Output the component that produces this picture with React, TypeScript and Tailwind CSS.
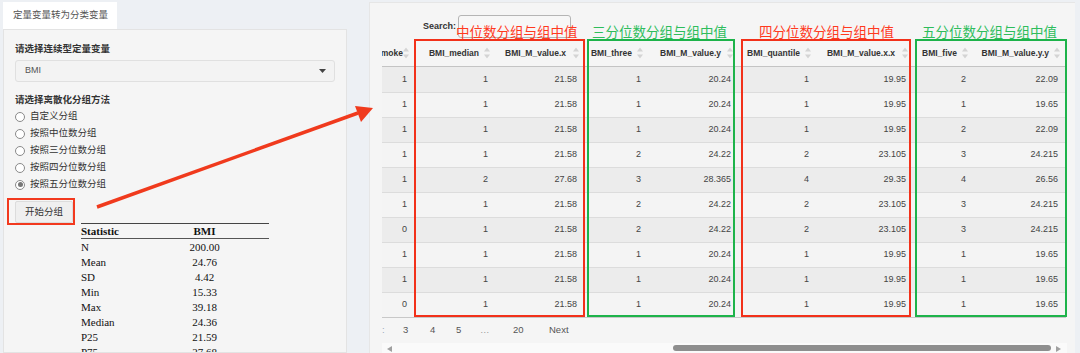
import React from 'react';

const cols = [
  { name: 'smoke', w: 'w-[33px]', pr: 'pr-[12px]' },
  { name: 'BMI_median', w: 'w-[81px]', pr: 'pr-[17px]' },
  { name: 'BMI_M_value.x', w: 'w-[89px]', pr: 'pr-[19px]' },
  { name: 'BMI_three', w: 'w-[64px]', pr: 'pr-[17px]' },
  { name: 'BMI_M_value.y', w: 'w-[90px]', pr: 'pr-[18px]' },
  { name: 'BMI_quantile', w: 'w-[78px]', pr: 'pr-[17px]' },
  { name: 'BMI_M_value.x.x', w: 'w-[97px]', pr: 'pr-[19px]' },
  { name: 'BMI_five', w: 'w-[60px]', pr: 'pr-[17px]' },
  { name: 'BMI_M_value.y.y', w: 'w-[92px]', pr: 'pr-[17px]' },
];

const rows = [
  ['1', '1', '21.58', '1', '20.24', '1', '19.95', '2', '22.09'],
  ['1', '1', '21.58', '1', '20.24', '1', '19.95', '1', '19.65'],
  ['1', '1', '21.58', '1', '20.24', '1', '19.95', '2', '22.09'],
  ['1', '1', '21.58', '2', '24.22', '2', '23.105', '3', '24.215'],
  ['1', '2', '27.68', '3', '28.365', '4', '29.35', '4', '26.56'],
  ['1', '1', '21.58', '2', '24.22', '2', '23.105', '3', '24.215'],
  ['0', '1', '21.58', '2', '24.22', '2', '23.105', '3', '24.215'],
  ['1', '1', '21.58', '1', '20.24', '1', '19.95', '1', '19.65'],
  ['1', '1', '21.58', '1', '20.24', '1', '19.95', '1', '19.65'],
  ['0', '1', '21.58', '1', '20.24', '1', '19.95', '1', '19.65'],
];

const stats = [
  ['N', '200.00'],
  ['Mean', '24.76'],
  ['SD', '4.42'],
  ['Min', '15.33'],
  ['Max', '39.18'],
  ['Median', '24.36'],
  ['P25', '21.59'],
  ['P75', '27.68'],
];

const methods = ['自定义分组', '按照中位数分组', '按照三分位数分组', '按照四分位数分组', '按照五分位数分组'];

const SortIcon = () => (
  <svg className="absolute right-[6px] top-1/2 -translate-y-1/2" width="6" height="11" viewBox="0 0 6 11">
    <path d="M3 0L6 4H0Z" fill="#d4d4d4" />
    <path d="M3 11L6 7H0Z" fill="#d4d4d4" />
  </svg>
);

const App: React.FC = () => {
  return (
    <div className="relative w-[1080px] h-[353px] overflow-hidden bg-[#edf0f4] flex font-['Liberation_Sans','Noto_Sans_CJK_SC',sans-serif] text-[#333]">
      {/* left sidebar */}
      <div className="w-[347px] h-[353px] pl-[3px] pt-[2px] flex flex-col shrink-0">
        <div className="w-[114px] h-[27px] shrink-0 bg-white flex items-center pl-[10px] text-[9.5px] text-[#555]">
          定量变量转为分类变量
        </div>
        <div className="flex-1 min-h-0 overflow-hidden bg-[#f5f5f5] border border-[#e3e3e3] px-[11px] pt-[12px]">
          <div className="text-[9.5px] leading-[14px] font-bold">请选择连续型定量变量</div>
          <div className="mt-[4px] h-[22px] border border-[#e0e0e0] rounded-[3px] bg-[#f3f3f3] flex items-center justify-between pl-[9px] pr-[8px]">
            <span className="text-[9px] text-[#555]">BMI</span>
            <svg width="7" height="4" viewBox="0 0 7 4">
              <path d="M0 0H7L3.5 4Z" fill="#444" />
            </svg>
          </div>
          <div className="mt-[11px] text-[9.5px] leading-[14px] font-bold">请选择离散化分组方法</div>
          <div className="mt-[1px] flex flex-col">
            {methods.map((m, i) => (
              <div key={m} className="h-[17px] flex items-center gap-[5px]">
                <span className="w-[10px] h-[10px] rounded-full border border-[#8a8a8a] bg-white flex items-center justify-center">
                  {i === 4 && <span className="w-[5px] h-[5px] rounded-full bg-[#777]" />}
                </span>
                <span className="text-[9.5px] text-[#333]">{m}</span>
              </div>
            ))}
          </div>
          <div className="relative mt-[8px] w-[58px] h-[22px]">
            <div className="w-[58px] h-[22px] bg-[#efefef] border border-[#dcdcdc] rounded-[2px] flex items-center justify-center text-[9.5px] text-[#333]">
              开始分组
            </div>
            <div className="absolute -left-[8px] -top-[3px] -right-[2px] -bottom-[2px] border-2 border-[#f2391e]" />
          </div>
          <div className="ml-[66px] w-[188px] border-t-[1.5px] border-[#444] font-['Liberation_Serif',serif] text-[11px] text-[#111]">
            <div className="grid grid-cols-[59px_129px] h-[15px] leading-[15px] font-bold border-b border-[#555]">
              <span>Statistic</span>
              <span className="text-center">BMI</span>
            </div>
            {stats.map(([k, v]) => (
              <div key={k} className="grid grid-cols-[59px_129px] h-[15px] leading-[17px]">
                <span>{k}</span>
                <span className="text-center">{v}</span>
              </div>
            ))}
          </div>
        </div>
      </div>

      {/* right main panel */}
      <div className="relative ml-[22px] mt-[2px] w-[706px] h-[351px] bg-[#f5f5f5] border-t border-l border-[#e6e6e6] pl-[12px] flex flex-col">
        <div className="flex items-center ml-[41px] mt-[12px] h-[23px]">
          <span className="text-[9px] font-bold">Search:</span>
          <div className="ml-[2px] w-[113px] h-[23px] border border-[#b5b5b5] rounded-[3px] bg-[#f7f7f7]" />
        </div>

        <div className="mt-[2px] w-[684px] text-[9px]">
          <div className="flex h-[27px] border-b border-[#c4c4c4]">
            {cols.map((c) => (
              <div key={c.name} className={`${c.w} ${c.pr} relative flex items-center justify-end overflow-hidden font-bold text-[8.5px] whitespace-nowrap`}>
                <span>{c.name}</span>
                <SortIcon />
              </div>
            ))}
          </div>
          {rows.map((r, ri) => (
            <div key={ri} className={`flex h-[25px] ${ri > 0 ? 'border-t border-[#dcdcdc]' : ''} ${ri % 2 === 0 ? 'bg-[#ececec]' : 'bg-[#f4f4f4]'}`}>
              {r.map((v, ci) => (
                <div key={ci} className={`${cols[ci].w} flex items-center justify-end pr-[8px] text-[#444]`}>
                  {v}
                </div>
              ))}
            </div>
          ))}
          <div className="border-t border-[#c8c8c8]" />
        </div>

        <div className="flex items-center h-[28px] text-[9.5px] text-[#555]">
          <span className="w-[21px] overflow-hidden text-[#9ab]">:</span>
          <span className="w-[27px]">3</span>
          <span className="w-[26px]">4</span>
          <span className="w-[24px]">5</span>
          <span className="w-[33px] text-[#999]">…</span>
          <span className="w-[36px]">20</span>
          <span>Next</span>
        </div>

        <div className="relative w-[685px] h-[11px] bg-[#fafafa]">
          <svg className="absolute left-[5px] top-[3px]" width="5" height="6" viewBox="0 0 5 6">
            <path d="M0 3L5 0V6Z" fill="#a0a0a0" />
          </svg>
          <div className="absolute left-[291px] top-[2px] w-[378px] h-[6px] rounded-full bg-[#8e8e8e]" />
          <svg className="absolute right-[6px] top-[3px]" width="5" height="6" viewBox="0 0 5 6">
            <path d="M5 3L0 0V6Z" fill="#a0a0a0" />
          </svg>
        </div>

        {/* annotation boxes */}
        <div className="absolute left-[44px] top-[36px] w-[171px] h-[278px] border-2 border-[#f2311a]" />
        <div className="absolute left-[217px] top-[36px] w-[148px] h-[278px] border-2 border-[#1db34a]" />
        <div className="absolute left-[371px] top-[36px] w-[170px] h-[278px] border-2 border-[#f2311a]" />
        <div className="absolute left-[545px] top-[36px] w-[152px] h-[278px] border-2 border-[#1db34a]" />
        <div className="absolute left-[86px] top-[20px] text-[13.5px] leading-[16px] text-[#ff3a1f] font-['Noto_Sans_CJK_SC',sans-serif]">中位数分组与组中值</div>
        <div className="absolute left-[222px] top-[20px] text-[13.5px] leading-[16px] text-[#2ebd5c] font-['Noto_Sans_CJK_SC',sans-serif]">三分位数分组与组中值</div>
        <div className="absolute left-[389px] top-[20px] text-[13.5px] leading-[16px] text-[#ff3a1f] font-['Noto_Sans_CJK_SC',sans-serif]">四分位数分组与组中值</div>
        <div className="absolute left-[552px] top-[20px] text-[13.5px] leading-[16px] text-[#2ebd5c] font-['Noto_Sans_CJK_SC',sans-serif]">五分位数分组与组中值</div>
      </div>

      {/* arrow overlay */}
      <svg className="absolute left-0 top-0 pointer-events-none" width="1080" height="353" viewBox="0 0 1080 353">
        <line x1="97" y1="207" x2="358" y2="113" stroke="#f03a1d" strokeWidth="3.5" />
        <path d="M373 108L355 106L361 122Z" fill="#f03a1d" />
      </svg>
    </div>
  );
};

export default App;
